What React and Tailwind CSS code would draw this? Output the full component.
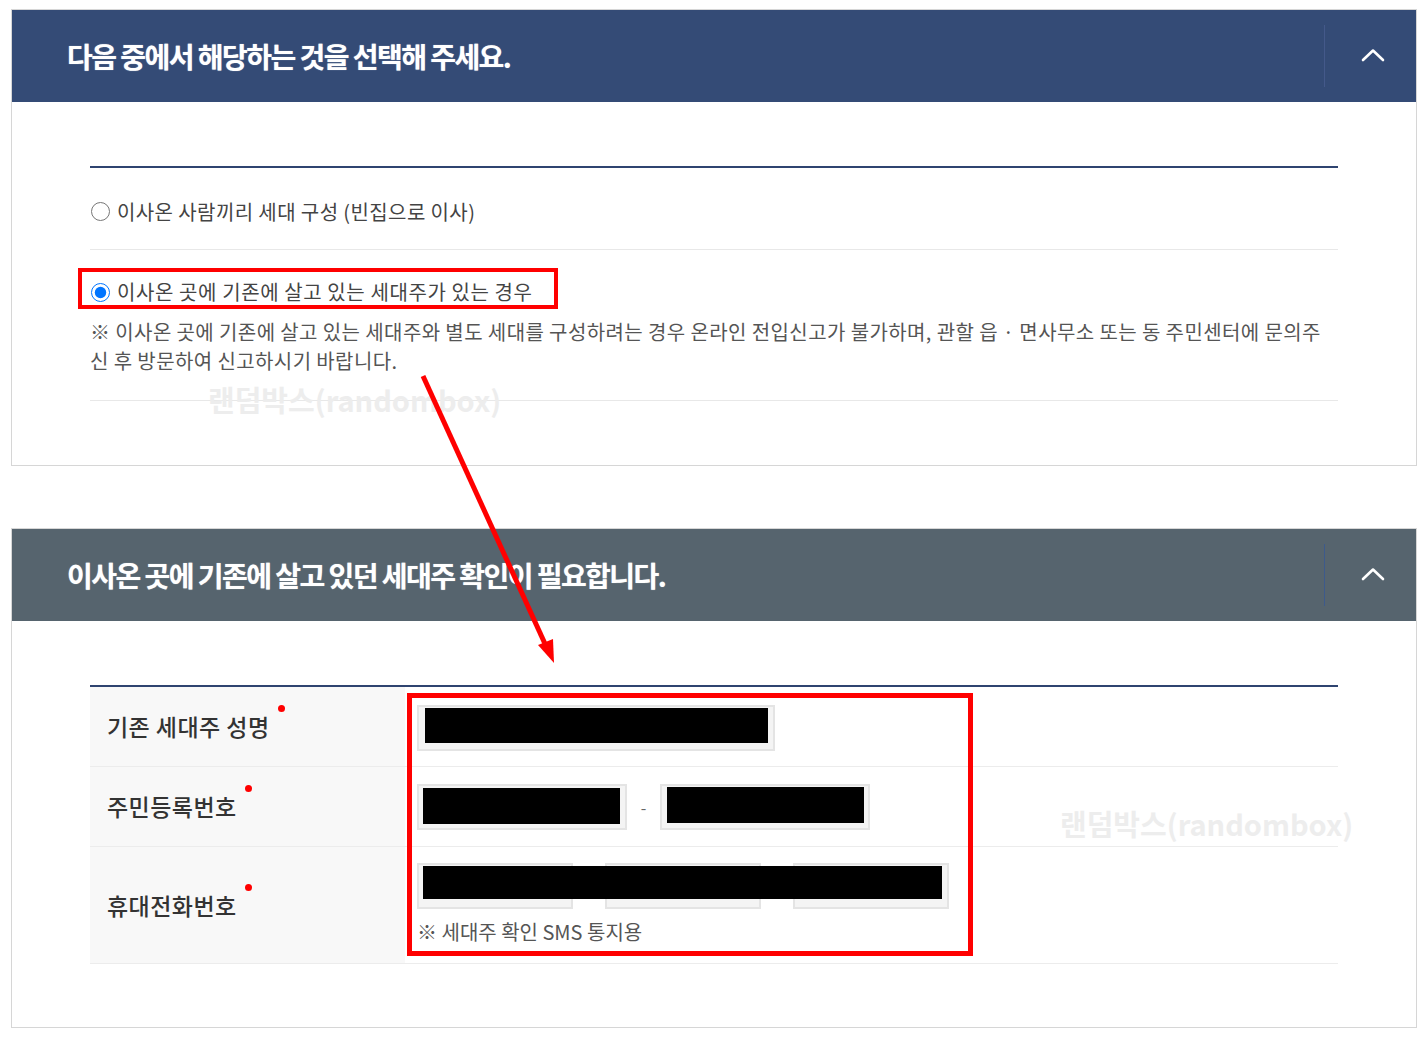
import React from "react";

const FONT = { fontFamily: '"Noto Sans CJK KR", "Noto Sans", sans-serif' };

function Chevron() {
  return (
    <svg width="24" height="14" viewBox="0 0 24 14" fill="none">
      <path d="M2 12 L12 2.5 L22 12" stroke="#ffffff" strokeWidth="2.6" strokeLinecap="round" strokeLinejoin="round" />
    </svg>
  );
}

function PanelHeader({ title, bg, divider }) {
  return (
    <div className={`flex h-[92px] items-center ${bg}`}>
      <div className="flex-1 pl-[55px] text-[28px] font-bold leading-none tracking-[-0.055em] text-white [text-shadow:0_0_1px_rgba(255,255,255,0.6)]">
        {title}
      </div>
      <div className={`h-[62px] w-px ${divider}`} />
      <div className="flex w-[91px] items-center justify-center pb-[2px] pl-[4px]">
        <Chevron />
      </div>
    </div>
  );
}

function RedDot() {
  return <span className="ml-[8px] inline-block h-[7px] w-[7px] -translate-y-[18px] rounded-full bg-[#ff0000]" />;
}

function Field({ w, children }) {
  return (
    <div className={`relative flex h-[46px] ${w} items-start border-2 border-[#e4e4e4] bg-[#f4f4f4]`}>{children}</div>
  );
}

const LABEL = "flex w-[315px] items-center bg-[#f8f8f8] pl-[17px] text-[23px] font-medium tracking-[0.02em] text-[#333]";

export default function App() {
  return (
    <div className="relative h-[1039px] w-[1428px] overflow-hidden bg-white px-[11px] pt-[9px]" style={FONT}>
      {/* Panel 1 */}
      <div className="border border-[#d6d6d6]">
        <PanelHeader title="다음 중에서 해당하는 것을 선택해 주세요." bg="bg-[#344b76]" divider="bg-[#44598a]" />
        <div className="bg-white px-[78px] pt-[64px] pb-[64px]">
          <div className="h-[2px] bg-[#2f4470]" />
          <div className="flex h-[82px] items-center gap-[7px] border-b border-[#e8e8e8] pt-[6px] text-[20px] tracking-[0.02em] text-[#444]">
            <input type="radio" readOnly className="m-0 ml-[1px] h-[19px] w-[19px] accent-[#0075ff]" />
            <span>이사온 사람끼리 세대 구성 (빈집으로 이사)</span>
          </div>
          <div className="border-b border-[#e8e8e8] pt-[30px] pb-[25px]">
            <div className="flex h-[24px] items-center gap-[7px] text-[20px] tracking-[0.03em] text-[#444]">
              <input type="radio" readOnly checked className="m-0 ml-[1px] h-[19px] w-[19px] accent-[#0075ff]" />
              <span>이사온 곳에 기존에 살고 있는 세대주가 있는 경우</span>
            </div>
            <p className="mt-[13px] whitespace-nowrap text-[20px] leading-[29px] tracking-[0.02em] text-[#555]">
              ※ 이사온 곳에 기존에 살고 있는 세대주와 별도 세대를 구성하려는 경우 온라인 전입신고가 불가하며, 관할 읍 · 면사무소 또는 동 주민센터에 문의주
              <br />
              신 후 방문하여 신고하시기 바랍니다.
            </p>
          </div>
        </div>
      </div>

      {/* Panel 2 */}
      <div className="mt-[62px] border border-[#d6d6d6]">
        <PanelHeader title="이사온 곳에 기존에 살고 있던 세대주 확인이 필요합니다." bg="bg-[#56646e]" divider="bg-[#3d5a8c]" />
        <div className="bg-white px-[78px] pt-[64px] pb-[63px]">
          <div className="h-[2px] bg-[#2f4470]" />
          {/* row 1 */}
          <div className="flex h-[80px] border-b border-[#ececec]">
            <div className={LABEL}>
              기존 세대주 성명<RedDot />
            </div>
            <div className="flex items-center pl-[12px] pt-[2px]">
              <Field w="w-[358px]">
                <div className="ml-[6px] mt-[1px] h-[35px] w-[343px] bg-black" />
              </Field>
            </div>
          </div>
          {/* row 2 */}
          <div className="flex h-[80px] border-b border-[#ececec]">
            <div className={LABEL}>
              주민등록번호<RedDot />
            </div>
            <div className="flex items-center pl-[12px]">
              <Field w="w-[210px]">
                <div className="ml-[4px] mt-[2px] h-[36px] w-[197px] bg-black" />
              </Field>
              <span className="w-[33px] text-center text-[16px] text-[#666]">-</span>
              <Field w="w-[210px]">
                <div className="ml-[5px] mt-[1px] h-[36px] w-[197px] bg-black" />
              </Field>
            </div>
          </div>
          {/* row 3 */}
          <div className="flex border-b border-[#ececec]">
            <div className={LABEL}>
              휴대전화번호<RedDot />
            </div>
            <div className="pl-[12px] pt-[16px] pb-[19px]">
              <div className="relative flex gap-[32px]">
                <Field w="w-[156px]" />
                <Field w="w-[156px]" />
                <Field w="w-[156px]" />
                <div className="absolute left-[6px] top-[3px] h-[33px] w-[519px] bg-black" />
              </div>
              <div className="mt-[11px] text-[20px] leading-[24px] tracking-[0em] text-[#555]">※ 세대주 확인 SMS 통지용</div>
            </div>
          </div>
        </div>
      </div>

      {/* watermarks */}
      <div className="pointer-events-none absolute left-[208px] top-[380px] text-[29px] font-bold leading-[38px] text-[#ededed]">랜덤박스(randombox)</div>
      <div className="pointer-events-none absolute left-[1060px] top-[804px] text-[29px] font-bold leading-[38px] text-[#ededed]">랜덤박스(randombox)</div>

      {/* annotations */}
      <div className="pointer-events-none absolute left-[78px] top-[268px] h-[41px] w-[480px] border-[4px] border-[#ff0000]" />
      <div className="pointer-events-none absolute left-[407px] top-[693px] h-[263px] w-[566px] border-[5px] border-[#ff0000]" />
      <svg className="pointer-events-none absolute left-0 top-0" width="1428" height="1039" viewBox="0 0 1428 1039">
        <line x1="423" y1="376" x2="546" y2="646" stroke="#ff0000" strokeWidth="5" />
        <polygon points="554,663 538,645 553,639" fill="#ff0000" />
      </svg>
    </div>
  );
}
